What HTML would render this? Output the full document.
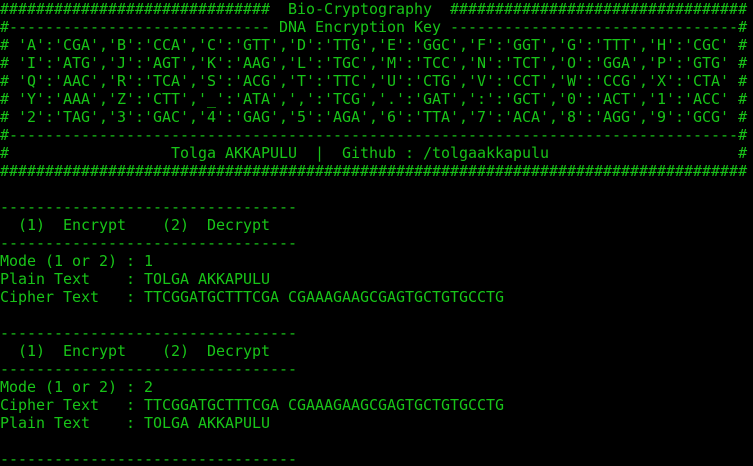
<!DOCTYPE html><html><head><style>
html,body{margin:0;background:#000;width:753px;height:466px;overflow:hidden}
pre{margin:0;font-family:"DejaVu Sans Mono","Liberation Mono",monospace;font-size:15px;line-height:18px;color:#18c418;white-space:pre;letter-spacing:-0.03px}
</style></head><body><pre>##############################  Bio-Cryptography  #################################
#----------------------------- DNA Encryption Key --------------------------------#
# 'A':'CGA','B':'CCA','C':'GTT','D':'TTG','E':'GGC','F':'GGT','G':'TTT','H':'CGC' #
# 'I':'ATG','J':'AGT','K':'AAG','L':'TGC','M':'TCC','N':'TCT','O':'GGA','P':'GTG' #
# 'Q':'AAC','R':'TCA','S':'ACG','T':'TTC','U':'CTG','V':'CCT','W':'CCG','X':'CTA' #
# 'Y':'AAA','Z':'CTT','_':'ATA',',':'TCG','.':'GAT',':':'GCT','0':'ACT','1':'ACC' #
# '2':'TAG','3':'GAC','4':'GAG','5':'AGA','6':'TTA','7':'ACA','8':'AGG','9':'GCG' #
#---------------------------------------------------------------------------------#
#                  Tolga AKKAPULU  |  Github : /tolgaakkapulu                     #
###################################################################################

---------------------------------
  (1)  Encrypt    (2)  Decrypt
---------------------------------
Mode (1 or 2) : 1
Plain Text    : TOLGA AKKAPULU
Cipher Text   : TTCGGATGCTTTCGA CGAAAGAAGCGAGTGCTGTGCCTG

---------------------------------
  (1)  Encrypt    (2)  Decrypt
---------------------------------
Mode (1 or 2) : 2
Cipher Text   : TTCGGATGCTTTCGA CGAAAGAAGCGAGTGCTGTGCCTG
Plain Text    : TOLGA AKKAPULU

---------------------------------</pre></body></html>
